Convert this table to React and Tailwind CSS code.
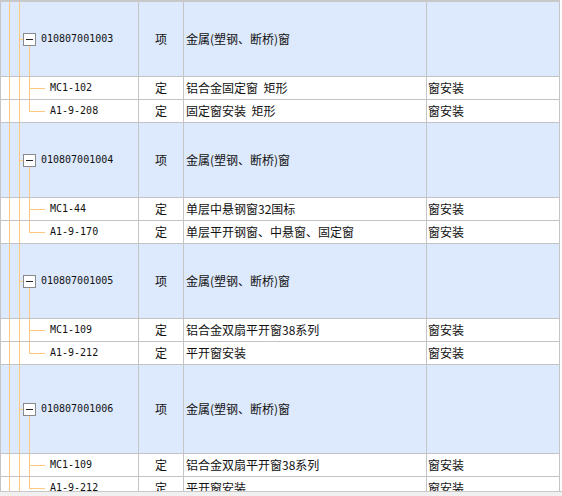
import React from "react";

const groups = [
  {
    code: "010807001003",
    h: "h-[75px]",
    name: "金属(塑钢、断桥)窗",
    kids: [
      { code: "MC1-102", name: "铝合金固定窗  矩形", unit: "窗安装" },
      { code: "A1-9-208", name: "固定窗安装  矩形", unit: "窗安装" },
    ],
  },
  {
    code: "010807001004",
    h: "h-[75px]",
    name: "金属(塑钢、断桥)窗",
    kids: [
      { code: "MC1-44", name: "单层中悬钢窗32国标", unit: "窗安装" },
      { code: "A1-9-170", name: "单层平开钢窗、中悬窗、固定窗", unit: "窗安装" },
    ],
  },
  {
    code: "010807001005",
    h: "h-[75px]",
    name: "金属(塑钢、断桥)窗",
    kids: [
      { code: "MC1-109", name: "铝合金双扇平开窗38系列", unit: "窗安装" },
      { code: "A1-9-212", name: "平开窗安装", unit: "窗安装" },
    ],
  },
  {
    code: "010807001006",
    h: "h-[89px]",
    name: "金属(塑钢、断桥)窗",
    kids: [
      { code: "MC1-109", name: "铝合金双扇平开窗38系列", unit: "窗安装" },
      { code: "A1-9-212", name: "平开窗安装", unit: "窗安装" },
    ],
  },
];

const cjk = { fontFamily: '"Noto Sans CJK SC", sans-serif' };
const mono = { fontFamily: '"DejaVu Sans Mono", monospace' };

function Cells({ type, name, unit }) {
  return (
    <>
      <div className="w-[45px] shrink-0 h-full border-r border-[#c4c4c4] flex items-center justify-center text-[12px] leading-none text-[#111]" style={cjk}>
        {type}
      </div>
      <div className="w-[243px] shrink-0 h-full border-r border-[#c4c4c4] flex items-center pl-[2px] text-[12px] leading-none text-[#111] whitespace-pre" style={cjk}>
        {name}
      </div>
      <div className="w-[133px] shrink-0 h-full border-r border-[#c4c4c4] flex items-center pl-[1px] text-[12px] leading-none text-[#111]" style={cjk}>
        {unit}
      </div>
    </>
  );
}

function GroupRow({ g }) {
  return (
    <div className={`flex shrink-0 ${g.h} w-[560px] border-l border-b border-[#c4c4c4] bg-[#dde9fd]`}>
      <div className="w-[138px] shrink-0 h-full border-r border-[#c4c4c4] flex items-stretch">
        <div className="w-[8px] shrink-0" />
        <div className="w-[10px] shrink-0 border-l border-[#ffc880]" />
        <div className="w-[4px] shrink-0 border-l border-[#ffc880] flex items-center">
          <div className="w-full h-px bg-[#ffc880]" />
        </div>
        <div className="w-[13px] shrink-0 flex flex-col">
          <div className="flex-1" />
          <div className="h-[13px] w-[13px] border border-[#8a8a8a] bg-white flex items-center justify-center">
            <div className="w-[7px] h-px bg-[#222]" />
          </div>
          <div className="flex-1">
            <div className="w-px h-full bg-[#ffc880] ml-[6px]" />
          </div>
        </div>
        <div className="ml-[5px] flex items-center text-[10px] leading-none text-[#111]" style={mono}>
          {g.code}
        </div>
      </div>
      <Cells type="项" name={g.name} unit="" />
    </div>
  );
}

function KidRow({ k, last }) {
  return (
    <div className="flex shrink-0 h-[23px] w-[560px] border-l border-b border-[#c4c4c4] bg-white">
      <div className="w-[138px] shrink-0 h-full border-r border-[#c4c4c4] flex items-stretch">
        <div className="w-[8px] shrink-0" />
        <div className="w-[10px] shrink-0 border-l border-[#ffc880]" />
        <div className="w-[10px] shrink-0 border-l border-[#ffc880]" />
        <div className="w-[16px] shrink-0 flex flex-col">
          <div className="flex-1 border-l border-b border-[#ffc880]" />
          <div className={`flex-1 ${last ? "" : "border-l border-[#ffc880]"}`} />
        </div>
        <div className="ml-[5px] flex items-center text-[10px] leading-none text-[#111]" style={mono}>
          {k.code}
        </div>
      </div>
      <Cells type="定" name={k.name} unit={k.unit} />
    </div>
  );
}

export default function App() {
  return (
    <div className="w-[562px] h-[496px] overflow-hidden bg-white flex flex-col">
      <div className="h-[2px] w-[560px] shrink-0 bg-[#c8c8c8]" />
      <div className="flex-1 overflow-hidden flex flex-col">
        {groups.map((g, i) => (
          <React.Fragment key={i}>
            <GroupRow g={g} />
            {g.kids.map((k, j) => (
              <KidRow key={j} k={k} last={j === g.kids.length - 1} />
            ))}
          </React.Fragment>
        ))}
      </div>
      <div className="h-[5px] shrink-0 border-t border-[#c8c8c8] bg-[#f0f0f0]" />
    </div>
  );
}
